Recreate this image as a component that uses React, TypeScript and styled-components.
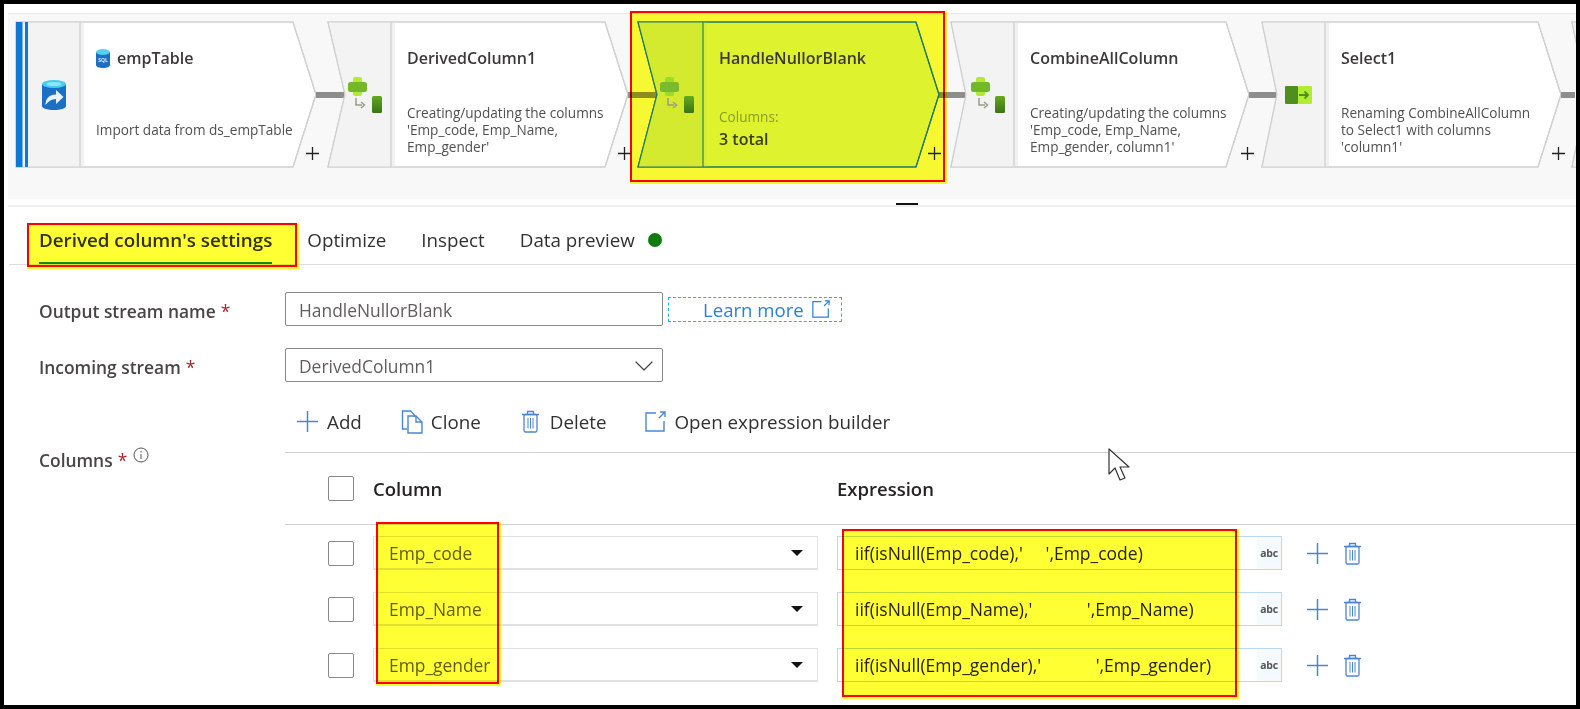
import React from "react";
import styled, { createGlobalStyle } from "styled-components";
import { ChevronDown } from "lucide-react";

const Global = createGlobalStyle`
  html, body { margin: 0; padding: 0; background: #fff; }
  * { box-sizing: border-box; }
  body { font-family: "Open Sans", "Noto Sans", "Liberation Sans", sans-serif; color: #252423; }
`;

const Frame = styled.div`
  position: relative;
  width: 1580px;
  height: 709px;
  border: 4px solid #000;
  background: #fff;
  overflow: hidden;
`;

const Canvas = styled.div`
  margin: 9px 0 0 4px;
  height: 186px;
  padding: 8px 0 0 8px;
  background: #f8f8f8;
  border-top: 1px solid #e8e8e8;
  display: flex;
`;

const Node = styled.div<{ $w: number; $gap: number; $link: number }>`
  position: relative;
  flex: 0 0 ${(p) => p.$w}px;
  width: ${(p) => p.$w}px;
  height: 145px;
  margin-right: ${(p) => p.$gap}px;
  &::after {
    content: "";
    position: absolute;
    left: 100%;
    top: 70px;
    width: ${(p) => p.$link}px;
    height: 6px;
    background: #8e8e8e;
  }
`;

const Shape = styled.svg<{ $hot?: boolean }>`
  position: absolute;
  left: 0;
  top: 0;
  overflow: visible;
  z-index: ${(p) => (p.$hot ? 3 : "auto")};
`;

const NodeInner = styled.div`
  position: relative;
  z-index: 4;
  display: flex;
  height: 100%;
`;

const IconCell = styled.div<{ $cell: number; $pad: number }>`
  flex: 0 0 ${(p) => p.$cell}px;
  display: flex;
  align-items: center;
  padding-left: ${(p) => p.$pad}px;
`;

const NodeBody = styled.div`
  flex: 1;
  padding: 25px 0 0 16px;
  min-width: 0;
`;

const NodeTitle = styled.div`
  display: flex;
  align-items: center;
  gap: 7px;
  height: 22px;
  font-size: 16px;
  font-weight: 600;
  color: #3b3a39;
  white-space: nowrap;
`;

const NodeDesc = styled.div<{ $top: number }>`
  margin-top: ${(p) => p.$top}px;
  font-size: 13.6px;
  line-height: 17px;
  color: #505050;
  white-space: pre;
`;

const MetaLabel = styled.div`
  margin-top: 37px;
  height: 22px;
  line-height: 22px;
  font-size: 13.6px;
  color: #8a9a2a;
`;

const MetaValue = styled.div`
  height: 22px;
  line-height: 22px;
  font-size: 16px;
  font-weight: 600;
  color: #3a3d10;
`;

const AddMark = styled.svg`
  position: absolute;
  z-index: 4;
  left: 290px;
  top: 125px;
`;

const Highlight = styled.div`
  position: absolute;
  border: 2px solid #f00;
  background: #ffff33;
  box-shadow: 1px 1px 0 1px #ffff33;
  mix-blend-mode: multiply;
  pointer-events: none;
  z-index: 2;
`;

const NodeHighlight = styled(Highlight)`
  left: -8px;
  top: -11px;
  width: 315px;
  height: 171px;
`;

const TabHighlight = styled(Highlight)`
  left: -12px;
  top: 16px;
  right: -25px;
  bottom: -5px;
`;

const ColumnHighlight = styled(Highlight)`
  left: 91px;
  top: -3px;
  width: 123px;
  height: 162px;
`;

const ExpressionHighlight = styled(Highlight)`
  left: 557px;
  top: 4px;
  width: 395px;
  height: 168px;
`;

const Splitter = styled.div`
  position: relative;
  margin: 6px 0 0 4px;
  height: 2px;
  background: #eeeeee;
  &::after {
    content: "";
    position: absolute;
    left: 888px;
    top: -2px;
    width: 22px;
    height: 2px;
    background: #111;
  }
`;

const Tabs = styled.div`
  display: flex;
  gap: 35px;
  height: 58px;
  margin-left: 5px;
  padding-left: 30px;
  border-bottom: 1px solid #dddddd;
`;

const Tab = styled.div<{ $active?: boolean }>`
  position: relative;
  display: flex;
  align-items: center;
  gap: 13px;
  height: 57px;
  padding-top: 10px;
  font-size: 18.8px;
  font-weight: ${(p) => (p.$active ? 600 : 400)};
  color: ${(p) => (p.$active ? "#323130" : "#323130")};
  border-bottom: 2px solid ${(p) => (p.$active ? "#138a2a" : "transparent")};
  white-space: nowrap;
`;

const StatusDot = styled.span`
  width: 14px;
  height: 14px;
  border-radius: 50%;
  background: #107c10;
`;

const Form = styled.div`
  padding: 27px 0 0 35px;
  display: flex;
  flex-direction: column;
  gap: 22px;
`;

const FormRow = styled.div`
  display: flex;
  align-items: center;
  height: 34px;
`;

const Label = styled.div`
  flex: 0 0 246px;
  padding-top: 3px;
  font-size: 17.4px;
  font-weight: 600;
  color: #484644;
  white-space: nowrap;
`;

const Required = styled.span`
  color: #a4262c;
  font-weight: 400;
  margin-left: 5px;
`;

const TextBox = styled.div`
  width: 378px;
  height: 34px;
  display: flex;
  align-items: center;
  justify-content: space-between;
  padding: 1px 2px 0 13px;
  border: 1px solid #8a8886;
  border-radius: 2px;
  font-size: 17.4px;
  color: #605e5c;
`;

const LearnMore = styled.a`
  display: flex;
  align-items: center;
  gap: 8px;
  height: 25px;
  width: 174px;
  margin-left: 5px;
  padding-left: 34px;
  border: 1px dashed #14b5ea;
  font-size: 18.6px;
  color: #2e7fd3;
`;

const ColumnsRow = styled.div`
  display: flex;
  margin-top: -2px;
`;

const ColumnsLabel = styled(Label)`
  display: flex;
  margin-top: 47px;
  padding-top: 0;
  height: 22px;
  align-items: center;
`;

const InfoMark = styled.svg`
  margin: -10px 0 0 6px;
`;

const ColumnsPane = styled.div`
  position: relative;
  flex: 1;
`;

const Toolbar = styled.div`
  display: flex;
  align-items: center;
  height: 51px;
  padding: 0 0 11px 12px;
  border-bottom: 1px solid #d0d0d0;
`;

const ToolButton = styled.div<{ $gap: number; $space: number }>`
  display: flex;
  align-items: center;
  gap: ${(p) => p.$gap}px;
  margin-right: ${(p) => p.$space}px;
  font-size: 18.8px;
  color: #323130;
  white-space: nowrap;
`;

const HeaderRow = styled.div`
  display: flex;
  align-items: center;
  gap: 19px;
  height: 72px;
  padding: 0 0 0 43px;
  border-bottom: 1px solid #d0d0d0;
`;

const HeaderCell = styled.div<{ $w: number }>`
  flex: 0 0 ${(p) => p.$w}px;
  font-size: 18.5px;
  font-weight: 600;
  color: #252423;
`;

const Rows = styled.div`
  position: relative;
  display: flex;
  flex-direction: column;
  gap: 22px;
  padding: 11px 0 0 43px;
`;

const Row = styled.div`
  display: flex;
  align-items: center;
  gap: 19px;
  height: 34px;
`;

const Check = styled.span`
  flex: 0 0 26px;
  height: 25px;
  border: 1px solid #8a8886;
  border-radius: 2px;
  background: #fff;
`;

const ColumnSelect = styled.div`
  flex: 0 0 445px;
  height: 34px;
  display: flex;
  align-items: center;
  justify-content: space-between;
  padding: 0 14px 0 15px;
  border: 1px solid #e1e1e1;
  border-bottom-width: 2px;
  font-size: 17.4px;
  color: #605e5c;
`;

const Caret = styled.span`
  width: 0;
  height: 0;
  border-left: 6px solid transparent;
  border-right: 6px solid transparent;
  border-top: 6px solid #111;
`;

const ExpressionField = styled.div`
  flex: 0 0 445px;
  height: 34px;
  display: flex;
  align-items: stretch;
  justify-content: space-between;
  border: 1px solid #b9d8f2;
`;

const ExpressionText = styled.span`
  padding-left: 17px;
  line-height: 32px;
  font-size: 17.5px;
  color: #252423;
  white-space: pre;
`;

const TypeTag = styled.span`
  width: 24px;
  background: #f5faff;
  display: flex;
  align-items: center;
  justify-content: center;
  font-size: 10.5px;
  font-weight: 700;
  letter-spacing: -0.3px;
  color: #555;
`;

const RowActions = styled.div`
  display: flex;
  align-items: center;
  gap: 15px;
  margin-left: 6px;
`;

const Pointer = styled.svg`
  position: absolute;
  left: 823px;
  top: 46px;
  z-index: 5;
`;

const PlusIcon = ({ size = 21, color = "#4a86d0" }: { size?: number; color?: string }) => (
  <svg width={size} height={size} viewBox="0 0 21 21" fill="none">
    <path d="M10.5 0v21M0 10.5h21" stroke={color} strokeWidth="1.5" />
  </svg>
);

const TrashIcon = ({ w = 19, h = 23 }: { w?: number; h?: number }) => (
  <svg width={w} height={h} viewBox="0 0 19 23" fill="none" stroke="#4a86d0" strokeWidth="1.3">
    <path d="M1 4.5h17M6.5 4.5V1.5h6v3" />
    <rect x="3" y="4.5" width="13" height="17.5" rx="1.5" />
    <path d="M7 8v10.5M9.5 8v10.5M12 8v10.5" strokeWidth="1" />
  </svg>
);

const CloneIcon = () => (
  <svg width="23" height="24" viewBox="0 0 23 24" fill="none" stroke="#4a86d0" strokeWidth="1.4">
    <path d="M6 19H1.5V1h8l4 4v2" />
    <path d="M7 6h8l6 6v11H7z" />
    <path d="M15 6v6h6" />
  </svg>
);

const ExternalIcon = ({ size = 21, color = "#4a86d0" }: { size?: number; color?: string }) => (
  <svg width={size} height={size} viewBox="0 0 21 21" fill="none" stroke={color} strokeWidth="1.4">
    <path d="M11 2H1v18h18V10" />
    <path d="M15 1h5v5M20 1l-6 6" />
  </svg>
);

const SourceIcon = () => (
  <svg width="24" height="30" viewBox="0 0 24 30">
    <path d="M0 4v22c0 2.4 5.4 4 12 4s12-1.6 12-4V4z" fill="#1b6fc4" />
    <ellipse cx="12" cy="4" rx="12" ry="4" fill="#46cdf0" />
    <ellipse cx="12" cy="4" rx="7.5" ry="2" fill="#8ee6f8" />
    <path d="M3.5 25c0-6.5 4-10.5 10.5-10.5V10l7.5 7-7.5 7v-5c-4.5 0-7.5 2-10.5 6z" fill="#e8f4fc" />
  </svg>
);

const SqlIcon = () => (
  <svg width="14" height="19" viewBox="0 0 14 19">
    <path d="M0 3v13c0 1.7 3.1 3 7 3s7-1.3 7-3V3z" fill="#1b6fc4" />
    <ellipse cx="7" cy="3" rx="7" ry="3" fill="#55d0ef" />
    <text x="7" y="12.5" fontSize="5" fontFamily="Open Sans, sans-serif" fontWeight="700" textAnchor="middle" fill="#dcefff">SQL</text>
  </svg>
);

const DeriveIcon = ({ hot }: { hot?: boolean }) => (
  <svg width="34" height="36" viewBox="0 0 34 36">
    <rect x="5" y="0" width="9" height="19" rx="2" fill={hot ? "#9fd82f" : "#b4e93a"} />
    <rect x="0" y="5" width="19" height="10" rx="2.5" fill={hot ? "#79bb2c" : "#72b82a"} />
    <path d="M8 21v7h6" fill="none" stroke="#9a9a8a" strokeWidth="1.5" />
    <path d="M13 25l3.5 3-3.5 3" fill="none" stroke="#9a9a8a" strokeWidth="1.5" />
    <defs>
      <linearGradient id="deriveBar" x1="0" y1="0" x2="0" y2="1">
        <stop offset="0" stopColor="#68a81f" />
        <stop offset="1" stopColor="#3a7316" />
      </linearGradient>
    </defs>
    <rect x="24" y="19" width="10" height="17" rx="1.5" fill="url(#deriveBar)" />
  </svg>
);

const SelectIcon = () => (
  <svg width="27" height="18" viewBox="0 0 27 18">
    <rect x="13" y="0" width="14" height="18" rx="1" fill="#b2ec35" />
    <rect x="0" y="0" width="13" height="18" rx="1" fill="#4f8f1e" />
    <path d="M14 9h9M19.5 5.5L23 9l-3.5 3.5" fill="none" stroke="#4f8f1e" strokeWidth="1.8" />
  </svg>
);

type NodeData = {
  w: number;
  gap: number;
  link: number;
  notch: number;
  cell: number;
  pad: number;
  title?: string;
  desc?: string;
  descTop?: number;
  icon?: React.ReactNode;
  titleIcon?: React.ReactNode;
  source?: boolean;
  hot?: boolean;
  bare?: boolean;
};

const nodes: NodeData[] = [
  { w: 300, gap: 12, link: 29, notch: 0, cell: 64, pad: 26, title: "empTable", titleIcon: <SqlIcon />, desc: "Import data from ds_empTable", descTop: 52, icon: <SourceIcon />, source: true },
  { w: 300, gap: 10, link: 29, notch: 17, cell: 63, pad: 20, title: "DerivedColumn1", desc: "Creating/updating the columns\n'Emp_code, Emp_Name,\nEmp_gender'", descTop: 35, icon: <DeriveIcon /> },
  { w: 301, gap: 12, link: 27, notch: 19, cell: 65, pad: 22, title: "HandleNullorBlank", icon: <DeriveIcon hot />, hot: true },
  { w: 298, gap: 13, link: 29, notch: 15, cell: 63, pad: 20, title: "CombineAllColumn", desc: "Creating/updating the columns\n'Emp_code, Emp_Name,\nEmp_gender, column1'", descTop: 35, icon: <DeriveIcon /> },
  { w: 299, gap: 11, link: 14, notch: 15, cell: 63, pad: 23, title: "Select1", desc: "Renaming CombineAllColumn\nto Select1 with columns\n'column1'", descTop: 35, icon: <SelectIcon /> },
  { w: 300, gap: 0, link: 0, notch: 15, cell: 63, pad: 20, bare: true },
];

const NodeOutline = ({ n }: { n: NodeData }) => {
  const h = 145;
  const mid = 72.5;
  const tipX = n.w - 23;
  const outline = `0,0 ${tipX},0 ${n.w},${mid} ${tipX},${h} 0,${h} ${n.notch},${mid}`;
  const cellShape = `0,0 ${n.cell},0 ${n.cell},${h} 0,${h} ${n.notch},${mid}`;
  const stroke = n.hot ? "#1d7a62" : "#cfcfcf";
  return (
    <Shape $hot={n.hot} width={n.w} height={h} viewBox={`0 0 ${n.w} ${h}`}>
      <polygon points={outline} fill={n.hot ? "#dff22e" : "#ffffff"} stroke={stroke} strokeWidth="1.2" />
      <polygon points={cellShape} fill={n.hot ? "#d4ea2e" : "#f3f3f3"} />
      <rect x={n.cell} y="0.5" width="4" height={h - 1} fill={n.hot ? "#d8ee2e" : "#f1f1f1"} />
      <path d={`M${n.cell} 0V${h}`} stroke={n.hot ? "#4f9a4a" : "#d4d4d4"} strokeWidth="1.5" />
      <polygon points={outline} fill="none" stroke={stroke} strokeWidth="1.2" />
      {n.source && (
        <>
          <rect x="0" y="0" width="6.5" height={h} fill="#0f78d4" />
          <rect x="9" y="0" width="3" height={h} fill="#0f78d4" />
        </>
      )}
    </Shape>
  );
};

const rows = [
  { name: "Emp_code", expr: "iif(isNull(Emp_code),'     ',Emp_code)" },
  { name: "Emp_Name", expr: "iif(isNull(Emp_Name),'            ',Emp_Name)" },
  { name: "Emp_gender", expr: "iif(isNull(Emp_gender),'            ',Emp_gender)" },
];

export default function App() {
  return (
    <Frame>
      <Global />
      <Canvas>
        {nodes.map((n, i) => (
          <Node key={i} $w={n.w} $gap={n.gap} $link={n.link}>
            <NodeOutline n={n} />
            {n.hot && <NodeHighlight />}
            {!n.bare && (
              <>
                <NodeInner>
                  <IconCell $cell={n.cell} $pad={n.pad}>{n.icon}</IconCell>
                  <NodeBody>
                    <NodeTitle>
                      {n.titleIcon}
                      {n.title}
                    </NodeTitle>
                    {n.hot ? (
                      <>
                        <MetaLabel>Columns:</MetaLabel>
                        <MetaValue>3 total</MetaValue>
                      </>
                    ) : (
                      <NodeDesc $top={n.descTop ?? 35}>{n.desc}</NodeDesc>
                    )}
                  </NodeBody>
                </NodeInner>
                <AddMark width="13" height="13" viewBox="0 0 13 13">
                  <path d="M6.5 0v13M0 6.5h13" stroke="#222" strokeWidth="1.3" />
                </AddMark>
              </>
            )}
          </Node>
        ))}
      </Canvas>
      <Splitter />
      <Tabs>
        <Tab $active>
          Derived column's settings
          <TabHighlight />
        </Tab>
        <Tab>Optimize</Tab>
        <Tab>Inspect</Tab>
        <Tab>
          Data preview
          <StatusDot />
        </Tab>
      </Tabs>
      <Form>
        <FormRow>
          <Label>
            Output stream name<Required>*</Required>
          </Label>
          <TextBox>HandleNullorBlank</TextBox>
          <LearnMore>
            Learn more
            <ExternalIcon size={18} color="#2e7fd3" />
          </LearnMore>
        </FormRow>
        <FormRow>
          <Label>
            Incoming stream<Required>*</Required>
          </Label>
          <TextBox>
            DerivedColumn1
            <ChevronDown size={32} strokeWidth={0.9} color="#444" />
          </TextBox>
        </FormRow>
        <ColumnsRow>
          <ColumnsLabel>
            Columns<Required>*</Required>
            <InfoMark width="16" height="16" viewBox="0 0 16 16" fill="none" stroke="#555" strokeWidth="1">
              <circle cx="8" cy="8" r="7" />
              <path d="M8 7v5M8 4v1.5" />
            </InfoMark>
          </ColumnsLabel>
          <ColumnsPane>
            <Toolbar>
              <ToolButton $gap={9} $space={39}><PlusIcon />Add</ToolButton>
              <ToolButton $gap={7} $space={40}><CloneIcon />Clone</ToolButton>
              <ToolButton $gap={10} $space={38}><TrashIcon />Delete</ToolButton>
              <ToolButton $gap={9} $space={0}><ExternalIcon />Open expression builder</ToolButton>
            </Toolbar>
            <HeaderRow>
              <Check />
              <HeaderCell $w={445}>Column</HeaderCell>
              <HeaderCell $w={443}>Expression</HeaderCell>
            </HeaderRow>
            <Rows>
              {rows.map((r) => (
                <Row key={r.name}>
                  <Check />
                  <ColumnSelect>
                    {r.name}
                    <Caret />
                  </ColumnSelect>
                  <ExpressionField>
                    <ExpressionText>{r.expr}</ExpressionText>
                    <TypeTag>abc</TypeTag>
                  </ExpressionField>
                  <RowActions>
                    <PlusIcon />
                    <TrashIcon />
                  </RowActions>
                </Row>
              ))}
              <ColumnHighlight />
              <ExpressionHighlight />
            </Rows>
            <Pointer width="22" height="33" viewBox="0 0 22 33">
              <path d="M1 1v25l6-6 5 12 5-2-5-11h9z" fill="#fff" stroke="#333" strokeWidth="1.2" strokeLinejoin="round" />
            </Pointer>
          </ColumnsPane>
        </ColumnsRow>
      </Form>
    </Frame>
  );
}
